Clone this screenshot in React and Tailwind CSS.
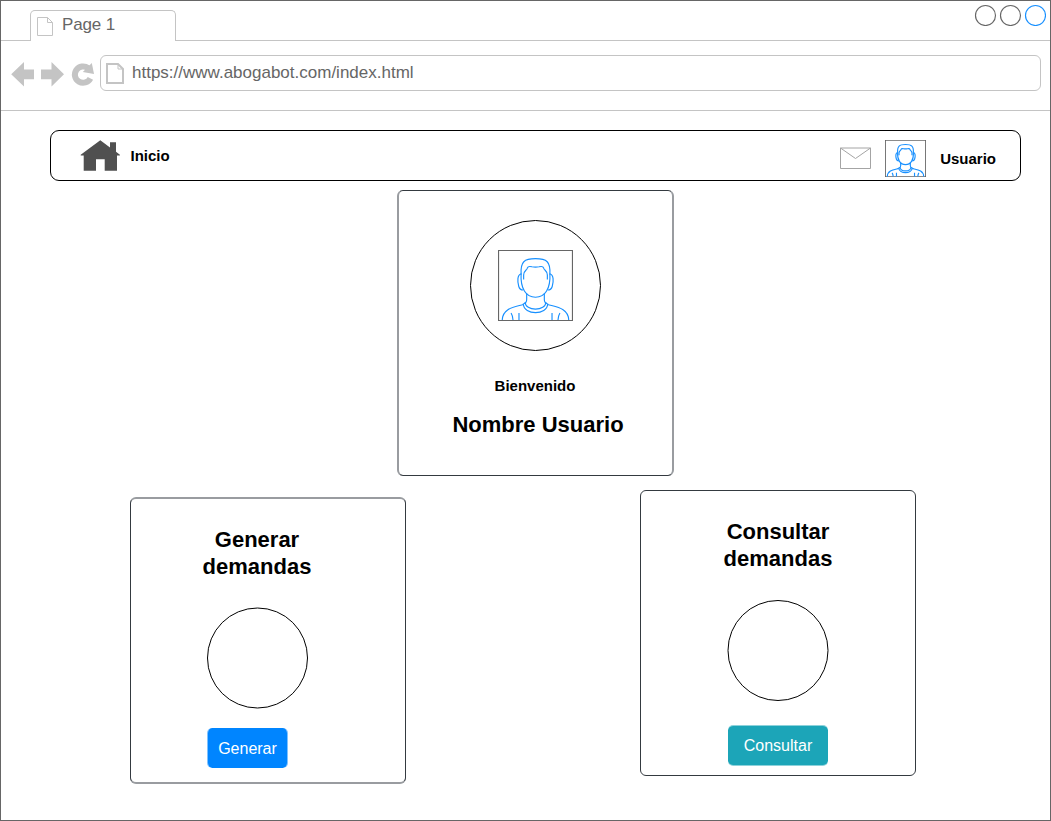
import React from "react";

function PageIcon({ className, strokeWidth, width, height, fold }) {
  const i = strokeWidth / 2;
  return (
    <svg className={className} width={width} height={height} fill="none" stroke="#c4c4c4" strokeWidth={strokeWidth}>
      <path d={`M${i} ${i} H${width - i - fold} L${width - i} ${i + fold} V${height - i} H${i} Z`} />
      <path d={`M${width - i - fold} ${i} V${i + fold} H${width - i}`} strokeWidth="1" />
    </svg>
  );
}

function Avatar({ className, width, height }) {
  return (
    <svg className={className} width={width} height={height} viewBox="-0.5 -0.5 74 71" preserveAspectRatio="none" fill="none">
      <rect x="0" y="0" width="73" height="70" stroke="#666666" strokeWidth="1.2" vectorEffect="non-scaling-stroke" />
      <g stroke="#1890ff" strokeWidth="1.15">
        {[
          "M22.300 24 C21.500 11 25.500 8.200 36.500 8.200 C47.500 8.200 51.500 11 50.700 24",
          "M24.800 29 V24.500 C24.800 20 28 20 28.500 17.500 C29 15.600 31 15.800 33 16.300 Q36.500 17 40 16.300 C42 15.800 44 15.600 44.500 17.500 C45 20 48.200 20 48.200 24.500 V29",
          "M22.300 23 C21.500 38 27 46.700 36.500 46.700 C46 46.700 51.500 38 50.700 23",
          "M22.300 23.500 C18.500 24 18.500 31 20 36 Q21 39.500 24.300 39.500",
          "M50.700 23.500 C54.500 24 54.500 31 53 36 Q52 39.500 48.700 39.500",
          "M27.800 43 V49 Q27.800 52.500 24.500 53.500 C25 65 48 65 48.500 53.500 Q45.200 52.500 45.200 49 V43",
          "M26.300 51.500 C26 61 47 61 46.700 51.500",
          "M24.500 54 C16 56.500 4 57.500 3.700 69.500 M48.500 54 C57 56.500 69 57.500 69.300 69.500",
          "M12.400 62.500 Q14 65 14.300 69.500 M20.200 62.500 V69.500 M60.600 62.500 Q59 65 58.700 69.500 M52.800 62.500 V69.500",
        ].map((d) => (
          <path key={d} d={d} vectorEffect="non-scaling-stroke" />
        ))}
      </g>
    </svg>
  );
}

function BrowserChrome() {
  return (
    <header className="h-[110px] shrink-0 border-b border-[#c4c4c4]">
      <div className="flex h-10 items-end">
        <div className="h-px w-[29px] bg-[#c4c4c4]" />
        <div className="flex h-[31px] w-[146px] rounded-t-[5px] border border-b-0 border-[#c4c4c4] pl-[6px] pt-[6px]">
          <PageIcon width={16} height={19} fold={5} strokeWidth={1} />
          <span className="-mt-[2px] ml-[9px] text-[17px] leading-[20px] tracking-[-0.15px] text-[#666666]">Page 1</span>
        </div>
        <div className="flex h-10 flex-1 justify-end border-b border-[#c4c4c4] pr-[4px] pt-[3px]">
          <svg width="72" height="22" fill="none" strokeWidth="1.15">
            <circle cx="11.500" cy="11.500" r="10" stroke="#666666" />
            <circle cx="36.500" cy="11.500" r="10" stroke="#666666" />
            <circle cx="61.500" cy="11.500" r="10" stroke="#1890ff" />
          </svg>
        </div>
      </div>
      <div className="flex pl-[10px] pr-[9px] pt-[14px]">
        <svg className="mt-[6px]" width="89" height="28" fill="none">
          <path d="M0.200 13.300 L13 1 V8.500 H23 V18.200 H13 V25.500 Z" fill="#c4c4c4" />
          <path d="M53 13.300 L40.500 1 V8.500 H30 V18.200 H40.500 V25.500 Z" fill="#c4c4c4" />
          <path d="M79.400 17.300 A8.200 8.200 0 1 1 77.200 7.200" stroke="#c4c4c4" strokeWidth="6" />
          <path d="M80.800 2 L83 13 L71.800 11 Z" fill="#c4c4c4" />
        </svg>
        <div className="flex h-9 flex-1 rounded-[6px] border border-[#c4c4c4] pl-[5px] pt-[7px]">
          <PageIcon width={18} height={21} fold={5} strokeWidth={2} />
          <span className="ml-[8px] text-[17px] leading-[20px] text-[#666666]">https://www.abogabot.com/index.html</span>
        </div>
      </div>
    </header>
  );
}

function NavBar() {
  return (
    <nav className="ml-[49px] mt-[19px] flex h-[51px] w-[971px] rounded-[9px] border border-black text-[15px] font-bold leading-[18px]">
      <svg className="ml-[29px] mt-[9px]" width="40" height="31" fill="#505050">
        <path d="M20.300 0.300 L30 7.400 V2.300 H36 V11.800 L39.900 14.700 V15.500 H37 V30.700 H24.700 V19.300 H16 V30.700 H3.700 V15.500 H0.700 V14.700 Z" />
      </svg>
      <span className="ml-[10.5px] mt-[16px]">Inicio</span>
      <svg className="ml-auto mt-[16px]" width="31" height="22" fill="none" stroke="#a4a4a4">
        <path d="M0.500 1 H30.500 V21.500 H0.500 Z L15.500 11.500 L30.500 1" />
      </svg>
      <Avatar className="ml-[14px] mt-[9px]" width={41} height={37} />
      <span className="ml-[14px] mr-[24px] mt-[19px]">Usuario</span>
    </nav>
  );
}

function ActionTitle({ first, second }) {
  return (
    <h2 className="text-center text-[22px] font-bold leading-[27px]">
      {first}
      <br />
      {second}
    </h2>
  );
}

export default function App() {
  return (
    <div className="flex h-[821px] w-[1051px] flex-col border border-[#666666] bg-white font-['Liberation_Sans',Arial,sans-serif] text-black">
      <BrowserChrome />
      <main>
        <NavBar />
        <section className="ml-[396px] mt-[9px] flex h-[286px] w-[277px] flex-col items-center rounded-[6px] border-x-2 border-y border-x-[#999ca0] border-y-[#343a40] pt-[29px]">
          <div className="flex size-[131px] items-center justify-center rounded-full border border-black">
            <Avatar width={75} height={71} />
          </div>
          <p className="mr-px mt-[26px] text-[15px] leading-[18px]"><b>Bienvenido</b></p>
          <h1 className="ml-[5px] mt-[16px] text-[22px] font-bold leading-[27px]">Nombre Usuario</h1>
        </section>
        <div className="mt-[14px] flex items-start pl-[129px]">
          <section className="mt-[7px] h-[287px] w-[276px] rounded-[6px] border-x border-y-2 border-x-[#343a40] border-y-[#999ca0] pl-[71px] pt-[27px]">
            <div className="flex w-[110px] flex-col items-center">
              <ActionTitle first="Generar" second="demandas" />
            </div>
            <svg className="ml-[5px] mt-[26px]" width="102" height="104" fill="none">
              <circle cx="50.500" cy="52" r="50" stroke="black" />
            </svg>
            <button className="ml-[5px] mt-[18px] h-10 w-[81px] rounded-[5px] border-x border-[#0085ff]/50 bg-[#0085ff] bg-clip-padding pt-px text-[16px] leading-[39px] text-white">Generar</button>
          </section>
          <section className="ml-[234px] h-[286px] w-[276px] rounded-[6px] border border-[#343a40] pl-[82px] pt-[27px]">
            <div className="flex w-[110px] flex-col items-center">
              <ActionTitle first="Consultar" second="demandas" />
            </div>
            <svg className="ml-[3px] mt-[27px]" width="104" height="103" fill="none">
              <circle cx="52" cy="51.500" r="50" stroke="black" />
            </svg>
            <button className="ml-[5px] mt-[23px] h-[41px] w-[100px] rounded-[5px] border-y border-[#1ca5b8]/50 bg-[#1ca5b8] bg-clip-padding text-[16px] leading-[39px] text-white">Consultar</button>
          </section>
        </div>
      </main>
    </div>
  );
}
